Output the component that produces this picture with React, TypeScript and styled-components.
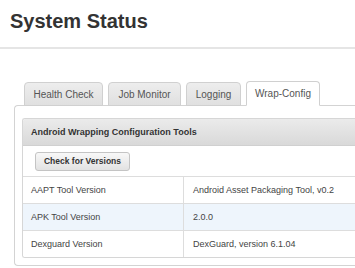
import React from "react";
import styled, { createGlobalStyle } from "styled-components";

const Global = createGlobalStyle`
  html, body { margin: 0; padding: 0; background: #fff; }
  body { font-family: "Liberation Sans", Arial, sans-serif; color: #333; overflow: hidden; }
`;

const Page = styled.div`
  width: 355px;
  height: 268px;
  overflow: hidden;
`;

const Header = styled.div`
  padding: 9px 10px 0 10px;
  height: 38px;
  border-bottom: 2px solid #e5e5e5;
`;

const Title = styled.h1`
  margin: 0;
  font-size: 20px;
  font-weight: bold;
  line-height: 24px;
  color: #333;
`;

const Content = styled.div`
  padding: 32px 0 0 14px;
`;

const TabList = styled.div`
  display: flex;
  gap: 5px;
  padding-left: 10px;
  margin-bottom: -1px;
  position: relative;
  z-index: 1;
`;

const Tab = styled.div<{ $active?: boolean; $w: number }>`
  box-sizing: border-box;
  width: ${(p) => p.$w}px;
  flex: none;
  padding: 0;
  display: flex;
  align-items: center;
  justify-content: center;
  white-space: nowrap;
  font-size: 10px;
  color: #555;
  border: 1px solid #d0d0d0;
  border-bottom-color: ${(p) => (p.$active ? "#fff" : "#d0d0d0")};
  border-radius: 4px 4px 0 0;
  background: ${(p) =>
    p.$active ? "#fff" : "linear-gradient(#ededed, #e0e0e0)"};
  height: ${(p) => (p.$active ? "25px" : "24px")};
  margin-top: ${(p) => (p.$active ? "0" : "1px")};
`;

const Panel = styled.div`
  border: 1px solid #d3d3d3;
  border-right: none;
  border-radius: 4px 0 0 4px;
  padding: 12px 0 7px 7px;
  background: #fff;
`;

const Box = styled.div`
  border: 1px solid #d6d6d6;
  border-right: none;
  border-radius: 3px 0 0 3px;
  overflow: hidden;
`;

const BoxHead = styled.div`
  height: 26px;
  display: flex;
  align-items: center;
  padding-left: 8px;
  font-size: 9px;
  font-weight: bold;
  color: #333;
  background: linear-gradient(#ebebeb, #d9d9d9);
  border-bottom: 1px solid #d0d0d0;
`;

const ButtonRow = styled.div`
  height: 30px;
  display: flex;
  align-items: center;
  padding-left: 12px;
  border-bottom: 1px solid #ddd;
`;

const Button = styled.button`
  height: 19px;
  width: 95px;
  padding: 0;
  font-family: "Liberation Sans", Arial, sans-serif;
  font-size: 8.5px;
  font-weight: bold;
  color: #333;
  border: 1px solid #c4c4c4;
  border-radius: 3px;
  background: linear-gradient(#f8f8f8, #e2e2e2);
`;

const Row = styled.div<{ $alt?: boolean; $last?: boolean }>`
  display: grid;
  grid-template-columns: 160px 1fr;
  height: 26px;
  background: ${(p) => (p.$alt ? "#eef5fc" : "#fff")};
  border-bottom: ${(p) => (p.$last ? "none" : "1px solid #ddd")};
`;

const Cell = styled.div<{ $divider?: boolean }>`
  display: flex;
  align-items: center;
  padding-left: ${(p) => (p.$divider ? "9px" : "8px")};
  font-size: 9px;
  color: #444;
  border-left: ${(p) => (p.$divider ? "1px solid #ddd" : "none")};
`;

const tabs: [string, number][] = [
  ["Health Check", 79],
  ["Job Monitor", 73],
  ["Logging", 55],
  ["Wrap-Config", 74],
];

const rows = [
  ["AAPT Tool Version", "Android Asset Packaging Tool, v0.2"],
  ["APK Tool Version", "2.0.0"],
  ["Dexguard Version", "DexGuard, version 6.1.04"],
];

export default function App() {
  return (
    <Page>
      <Global />
      <Header>
        <Title>System Status</Title>
      </Header>
      <Content>
        <TabList>
          {tabs.map(([t, w]) => (
            <Tab key={t} $w={w} $active={t === "Wrap-Config"}>
              {t}
            </Tab>
          ))}
        </TabList>
        <Panel>
          <Box>
            <BoxHead>Android Wrapping Configuration Tools</BoxHead>
            <ButtonRow>
              <Button>Check for Versions</Button>
            </ButtonRow>
            {rows.map(([k, v], i) => (
              <Row key={k} $alt={i === 1} $last={i === rows.length - 1}>
                <Cell>{k}</Cell>
                <Cell $divider>{v}</Cell>
              </Row>
            ))}
          </Box>
        </Panel>
      </Content>
    </Page>
  );
}
